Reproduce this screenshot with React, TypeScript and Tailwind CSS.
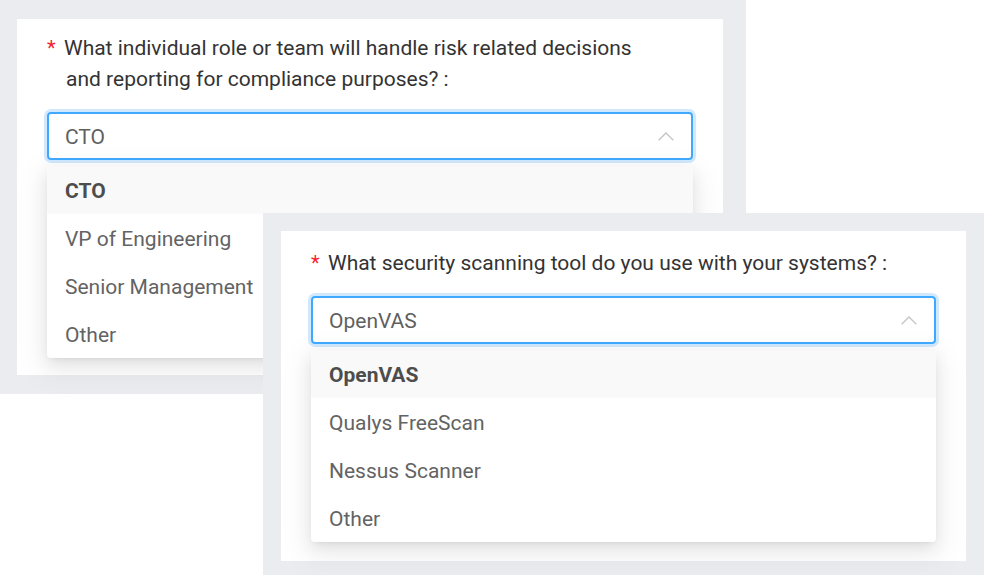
import React from "react";

type Question = {
  label: React.ReactNode;
  value: string;
  options: string[];
};

const questions: Question[] = [
  {
    label: (
      <>
        What individual role or team will handle risk related decisions
        <br />
        <span className="ml-[2px]">and reporting for compliance purposes?</span>
      </>
    ),
    value: "CTO",
    options: ["CTO", "VP of Engineering", "Senior Management", "Other"],
  },
  {
    label: <>What security scanning tool do you use with your systems?</>,
    value: "OpenVAS",
    options: ["OpenVAS", "Qualys FreeScan", "Nessus Scanner", "Other"],
  },
];

function ChevronUp() {
  return (
    <svg width="16" height="9" viewBox="0 0 16 9" fill="none">
      <path d="M0.7 8.3 L8 1 L15.3 8.3" stroke="#c4c4c4" strokeWidth="1.3" />
    </svg>
  );
}

function SelectField({ q }: { q: Question }) {
  return (
    <div className="flex flex-col">
      <div className="flex items-start text-[21px] leading-[31px] text-[#333333]">
        <span className="w-[17px] shrink-0 text-[20px] text-[#f5222d]">*</span>
        <span>
          {q.label}
          <span className="ml-[5px]">:</span>
        </span>
      </div>
      <div className="relative mt-[17px]">
        <div className="flex h-[48px] items-center justify-between rounded-[4px] border-2 border-[#40a9ff] pl-[16px] pr-[17px] shadow-[0_0_0_3px_rgba(24,144,255,0.2)]">
          <span className="pt-[3px] text-[21px] text-[#5f5f5f]">{q.value}</span>
          <ChevronUp />
        </div>
        <div className="absolute left-0 right-0 top-[54px] overflow-hidden rounded-[4px] bg-white shadow-[0_3px_6px_-4px_rgba(0,0,0,0.12),0_6px_16px_0_rgba(0,0,0,0.08),0_9px_28px_8px_rgba(0,0,0,0.05)]">
          {q.options.map((o) => (
            <div
              key={o}
              className={
                o === q.value
                  ? "flex h-[48px] items-center bg-[#f9f9f9] px-[18px] pt-[3px] text-[21px] font-bold text-[#4d4d4d]"
                  : "flex h-[48px] items-center px-[18px] pt-[3px] text-[21px] text-[#636363]"
              }
            >
              {o}
            </div>
          ))}
        </div>
      </div>
    </div>
  );
}

export default function App() {
  return (
    <div
      className="relative h-[577px] w-[984px] overflow-hidden bg-white"
      style={{ fontFamily: "Roboto, 'Liberation Sans', sans-serif" }}
    >
      <div className="absolute left-0 top-0 h-[394px] w-[746px] bg-[#ebecf0] pl-[17px] pt-[19px]">
        <div className="h-[356px] w-[706px] bg-white px-[30px] pt-[14px]">
          <SelectField q={questions[0]} />
        </div>
      </div>
      <div className="absolute left-[263px] top-[213px] h-[362px] w-[721px] bg-[#ebecf0] pl-[18px] pt-[18px]">
        <div className="h-[330px] w-[685px] bg-white px-[30px] pt-[17px]">
          <SelectField q={questions[1]} />
        </div>
      </div>
    </div>
  );
}
